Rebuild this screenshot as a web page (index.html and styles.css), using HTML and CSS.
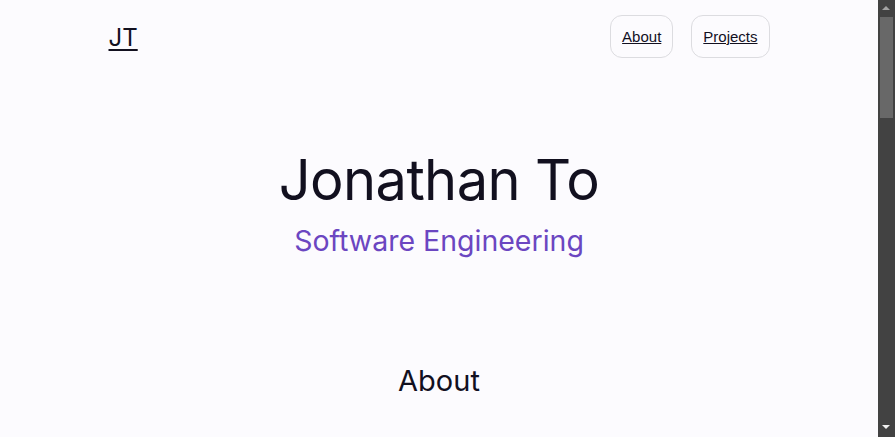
FILE: index.html
```html
<!DOCTYPE html>
<html lang="en">
<head>
<meta charset="utf-8">
<title>Jonathan To</title>
<link rel="stylesheet" href="styles.css">
</head>
<body>
<div class="page">
  <header class="topbar">
    <a class="logo" href="#">JT</a>
    <nav class="nav">
      <a class="nav-link" href="#about">About</a>
      <a class="nav-link" href="#projects">Projects</a>
    </nav>
  </header>
  <main class="main">
    <section class="hero">
      <h1 class="hero-title">Jonathan To</h1>
      <p class="hero-sub">Software Engineering</p>
    </section>
    <section class="section" id="about">
      <h2 class="section-title">About</h2>
    </section>
  </main>
</div>
<div class="scrollbar" aria-hidden="true">
  <span class="sb-arrow sb-up"></span>
  <span class="sb-thumb"></span>
  <span class="sb-arrow sb-down"></span>
</div>
</body>
</html>
```

FILE: styles.css
```css
html {
  background: #fcfbfe;
}
body {
  margin: 0;
  background: #fcfbfe;
  color: #12101f;
  font-family: Inter, "Noto Sans", sans-serif;
  height: 437px;
  overflow: hidden;
}
.page {
  margin-right: 17px;
}
.topbar {
  max-width: 661px;
  margin: 0 auto;
  padding-top: 15px;
  display: flex;
  justify-content: space-between;
  align-items: flex-start;
}
.logo {
  color: #12101f;
  font-size: 24px;
  line-height: 30px;
  margin-top: 8px;
  text-decoration: underline;
  text-decoration-thickness: 2px;
  text-underline-offset: 3px;
}
.nav {
  display: flex;
  gap: 18px;
}
.nav-link {
  display: block;
  font-family: "Liberation Sans", Arial, sans-serif;
  font-size: 15px;
  color: #12101f;
  padding: 12px 11px 12px 11px;
  line-height: 17px;
  border: 1px solid #dcdce0;
  border-radius: 12px;
}
.main {
  max-width: 661px;
  margin: 0 auto;
}
.hero {
  text-align: center;
  padding-top: 89px;
}
.hero-title {
  margin: 0;
  font-weight: 400;
  font-size: 56px;
  line-height: 66px;
  letter-spacing: -0.6px;
}
.hero-sub {
  margin: 0;
  margin-top: 11px;
  font-size: 28.5px;
  line-height: 34px;
  color: #6b46c1;
}
.section {
  text-align: center;
  padding-top: 106px;
}
.section-title {
  margin: 0;
  font-weight: 400;
  font-size: 29px;
  line-height: 34px;
}
.scrollbar {
  position: fixed;
  top: 0;
  right: 0;
  width: 17px;
  height: 437px;
  background: #424242;
}
.sb-thumb {
  position: absolute;
  left: 2px;
  top: 17px;
  width: 13px;
  height: 101px;
  background: #686868;
}
.sb-arrow {
  position: absolute;
  left: 4px;
  width: 0;
  height: 0;
  border-left: 4.5px solid transparent;
  border-right: 4.5px solid transparent;
}
.sb-up {
  top: 6px;
  border-bottom: 4px solid #a3a3a3;
}
.sb-down {
  top: 425px;
  border-top: 4px solid #f0f0f0;
}
```
